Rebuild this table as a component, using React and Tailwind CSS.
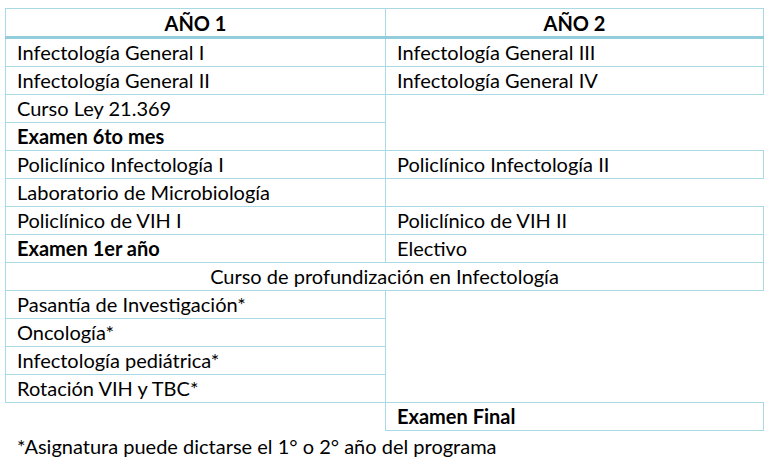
import React from "react";

const line = "border-[#a8d9e4]";

const Cell = ({ children, bold, className = "", ...rest }) => (
  <td
    {...rest}
    className={`h-[27px] px-[11px] py-0 align-middle leading-[27px] whitespace-nowrap ${
      bold ? "font-bold" : ""
    } ${className}`}
  >
    {children}
  </td>
);

const full = `border ${line}`;
const open = `border border-r-0 ${line}`;

const App = () => {
  return (
    <div
      className="w-[767px] h-[472px] bg-white text-black text-[20px] pt-[8px] pl-[5px]"
      style={{ fontFamily: "Lato, 'Liberation Sans', sans-serif" }}
    >
      <table className="border-collapse table-fixed w-[758px]">
        <colgroup>
          <col className="w-[380px]" />
          <col className="w-[378px]" />
        </colgroup>
        <tbody>
          {/* header */}
          <tr>
            <td className={`h-[29px] p-0 text-center font-bold leading-[26px] border border-b-[3px] border-b-[#92cddc] ${line}`}>
              AÑO 1
            </td>
            <td className={`h-[29px] p-0 text-center font-bold leading-[26px] border border-b-[3px] border-b-[#92cddc] ${line}`}>
              AÑO 2
            </td>
          </tr>
          <tr>
            <Cell className={full}>Infectología General I</Cell>
            <Cell className={full}>Infectología General III</Cell>
          </tr>
          <tr>
            <Cell className={full}>Infectología General II</Cell>
            <Cell className={full}>Infectología General IV</Cell>
          </tr>
          <tr>
            <Cell className={full}>Curso Ley 21.369</Cell>
            <Cell rowSpan={2} className={open} />
          </tr>
          <tr>
            <Cell bold className={full}>Examen 6to mes</Cell>
          </tr>
          <tr>
            <Cell className={full}>Policlínico Infectología I</Cell>
            <Cell className={full}>Policlínico Infectología II</Cell>
          </tr>
          <tr>
            <Cell className={full}>Laboratorio de Microbiología</Cell>
            <Cell className={open} />
          </tr>
          <tr>
            <Cell className={full}>Policlínico de VIH I</Cell>
            <Cell className={full}>Policlínico de VIH II</Cell>
          </tr>
          <tr>
            <Cell bold className={full}>Examen 1er año</Cell>
            <Cell className={full}>Electivo</Cell>
          </tr>
          <tr>
            <Cell colSpan={2} className={`${full} text-center`}>
              Curso de profundización en Infectología
            </Cell>
          </tr>
          <tr>
            <Cell className={full}>Pasantía de Investigación*</Cell>
            <Cell rowSpan={4} className={open} />
          </tr>
          <tr>
            <Cell className={full}>Oncología*</Cell>
          </tr>
          <tr>
            <Cell className={full}>Infectología pediátrica*</Cell>
          </tr>
          <tr>
            <Cell className={full}>Rotación VIH y TBC*</Cell>
          </tr>
          <tr>
            <Cell className="border-0" />
            <Cell bold className={full}>Examen Final</Cell>
          </tr>
        </tbody>
      </table>
      <p className="pl-[12px] leading-[28px] pt-[1px]">
        *Asignatura puede dictarse el 1° o 2° año del programa
      </p>
    </div>
  );
};

export default App;
